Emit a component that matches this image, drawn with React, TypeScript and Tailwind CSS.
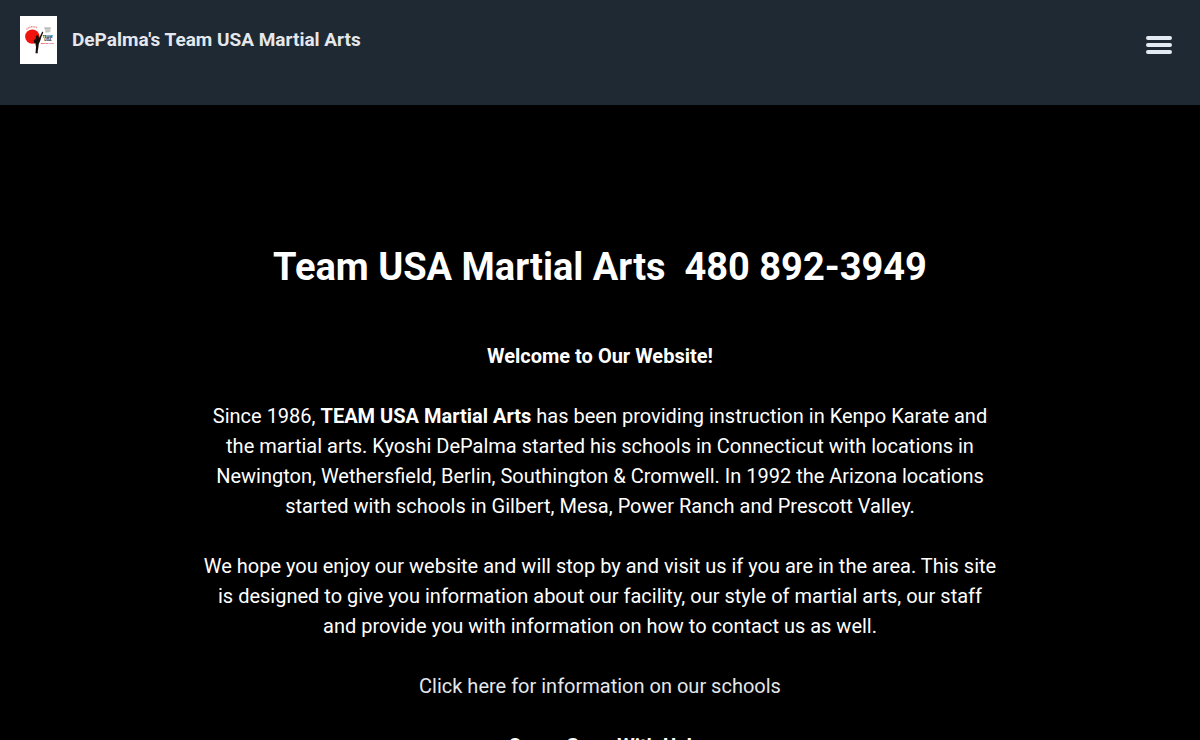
function Logo() {
  return (
    <svg viewBox="0 0 37 48" className="h-12 w-[37px] bg-white" role="img" aria-label="DePalma's Team USA Martial Arts logo">
      <path d="M6.500 13.500 Q11 9 17.500 11.800" fill="none" stroke="#e89a92" strokeWidth="1.500" strokeDasharray="1.200 .5" />
      <circle cx="12.300" cy="20.600" r="7.200" fill="#f0140f" />
      <path d="M22.300 15.500 L23.300 16.300 L21.500 20.500 L20.300 24.500 L18.800 28 L18.300 32 L17.600 36 L18 37.300 L15.500 37.300 L16 31 L15.300 27 L15.200 23 L17 21.500 L19.300 21.500 Z" fill="#160c0c" />
      <circle cx="17.200" cy="20.800" r="1.500" fill="#160c0c" />
      <path d="M15.500 22.500 L13.800 24.500 L14.200 27.500 L17 26.500 Z" fill="#160c0c" />
      <path d="M24 11 L31 11 L30.500 16 L25.500 17 Z" fill="#d5d5d5" />
      <path d="M25 12.500 H30 M26 15 H29.500" stroke="#a8a8a8" strokeWidth=".8" />
      <g fontFamily="Roboto, sans-serif" fontWeight="700" textAnchor="middle">
        <text x="27.500" y="21.500" fontSize="3.700" fill="#222">TEAM</text>
        <text x="27.800" y="25" fontSize="3.700" fill="#222">USA</text>
        <text x="27.500" y="28" fontSize="2.400" fill="#e3221c">Martial Arts</text>
      </g>
    </svg>
  );
}

function Header() {
  return (
    <header className="flex h-[105px] items-start justify-between bg-[#1f2933] pt-4 pr-7 pl-5">
      <a href="#home" className="flex items-center gap-[15px]">
        <Logo />
        <span className="text-[19px] leading-6 font-bold text-[#e4e7eb]">DePalma's Team USA Martial Arts</span>
      </a>
      <button type="button" aria-label="Open menu" className="mt-5 flex w-[26px] cursor-pointer flex-col gap-[3px]">
        <span className="h-1 w-full rounded-sm bg-[#e4eaf1]" />
        <span className="h-1 w-full rounded-sm bg-[#e4eaf1]" />
        <span className="h-1 w-full rounded-sm bg-[#e4eaf1]" />
      </button>
    </header>
  );
}

export default function App() {
  return (
    <div className="min-h-screen bg-black font-['Roboto',sans-serif] text-white">
      <Header />
      <main className="mx-auto max-w-[800px] pt-[132px] text-center text-[20px] leading-[30px]">
        <h1 className="text-[38px] leading-[60px] font-bold">Team USA Martial Arts&nbsp; 480 892-3949</h1>
        <div className="mt-11 space-y-[30px]">
          <h2 className="font-bold">Welcome to Our Website!</h2>
          <p>
            Since 1986, <strong className="font-bold">TEAM USA Martial Arts</strong> has been providing instruction in
            Kenpo Karate and the martial arts. Kyoshi DePalma started his schools in Connecticut with locations in
            Newington, Wethersfield, Berlin, Southington &amp; Cromwell. In 1992 the Arizona locations started with
            schools in Gilbert, Mesa, Power Ranch and Prescott Valley.
          </p>
          <p>
            We hope you enjoy our website and will stop by and visit us if you are in the area. This site is designed to
            give you information about our facility, our style of martial arts, our staff and provide you with
            information on how to contact us as well.
          </p>
          <p>
            <a href="#schools" className="text-[#e4e7eb]">Click here for information on our schools</a>
          </p>
          <h2 className="font-bold">Come Grow With Us!</h2>
        </div>
      </main>
    </div>
  );
}
